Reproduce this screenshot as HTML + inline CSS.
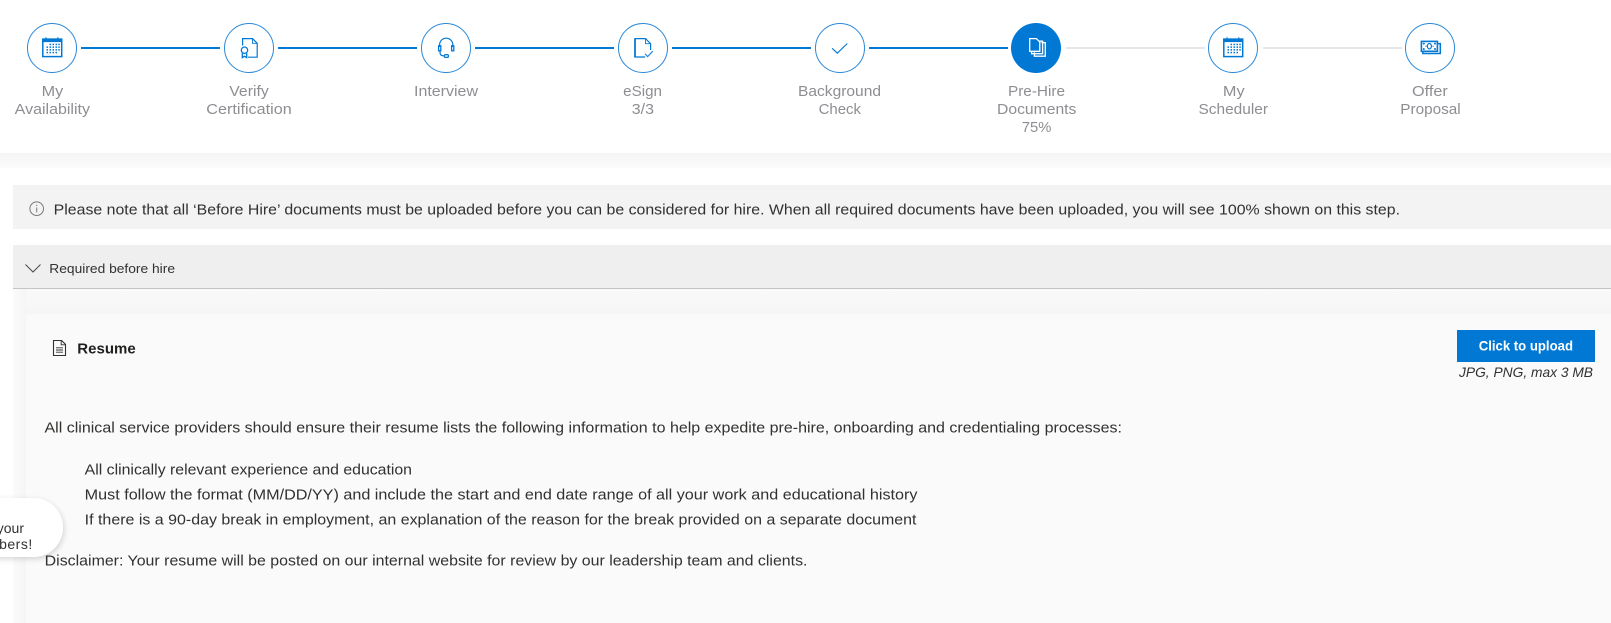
<!DOCTYPE html>
<html lang="en">
<head>
<meta charset="utf-8">
<title>Pre-Hire Documents</title>
<style>
html,body{margin:0;padding:0;background:#fff;width:1611px;height:623px;overflow:hidden}
svg{display:block;position:absolute;left:0;top:0}
text{font-family:"Liberation Sans",Arial,sans-serif}
.s{font-size:15px;fill:#8f8d92}
.b{font-size:15px;fill:#323130}
</style>
</head>
<body>
<svg width="1611" height="623" viewBox="0 0 1611 623" xmlns="http://www.w3.org/2000/svg">
<defs>
<linearGradient id="hs" x1="0" y1="0" x2="0" y2="1"><stop offset="0" stop-color="#f5f5f5"/><stop offset="1" stop-color="#fbfbfb"/></linearGradient>
<linearGradient id="ls" x1="0" y1="0" x2="1" y2="0"><stop offset="0" stop-color="#fbfbfb"/><stop offset="1" stop-color="#f5f5f5"/></linearGradient>
<linearGradient id="ts" x1="0" y1="0" x2="0" y2="1"><stop offset="0" stop-color="#f9f9f9"/><stop offset="1" stop-color="#f6f6f6"/></linearGradient>
<filter id="sh" x="-30%" y="-30%" width="160%" height="160%"><feDropShadow dx="1" dy="2" stdDeviation="3" flood-color="#000" flood-opacity=".16"/></filter>
<g id="cal" fill="none" stroke="#0078d4">
<rect x="-9.2" y="-8.2" width="18.9" height="17.5" stroke-width="1.5" fill="#fff"/>
<rect x="-9.8" y="-8.8" width="20" height="3.6" fill="#0078d4" stroke="none"/>
<path d="M-6-10V-6.5M5.8-10V-6.5" stroke-width="1.1"/>
<g fill="#0078d4" stroke="none">
<rect x="-2.5" y="-3.6" width="1.5" height="1.5"/><rect x=".5" y="-3.6" width="1.5" height="1.5"/><rect x="3.5" y="-3.6" width="1.5" height="1.5"/><rect x="6.3" y="-3.6" width="1.5" height="1.5"/>
<rect x="-5.5" y="-.9" width="1.5" height="1.5"/><rect x="-2.5" y="-.9" width="1.5" height="1.5"/><rect x=".5" y="-.9" width="1.5" height="1.5"/><rect x="3.5" y="-.9" width="1.5" height="1.5"/><rect x="6.3" y="-.9" width="1.5" height="1.5"/>
<rect x="-5.5" y="1.8" width="1.5" height="1.5"/><rect x="-2.5" y="1.8" width="1.5" height="1.5"/><rect x=".5" y="1.8" width="1.5" height="1.5"/><rect x="3.5" y="1.8" width="1.5" height="1.5"/><rect x="6.3" y="1.8" width="1.5" height="1.5"/>
<rect x="-5.5" y="4.5" width="1.5" height="1.5"/><rect x="-2.5" y="4.5" width="1.5" height="1.5"/><rect x=".5" y="4.5" width="1.5" height="1.5"/><rect x="3.5" y="4.5" width="1.5" height="1.5"/>
</g>
</g>
</defs>

<!-- header shadow -->
<rect x="0" y="153" width="1611" height="15" fill="url(#hs)"/>

<!-- connector lines -->
<g fill="#0078d4">
<rect x="81" y="47" width="139" height="2"/><rect x="278" y="47" width="139" height="2"/><rect x="475" y="47" width="139" height="2"/><rect x="672" y="47" width="139" height="2"/><rect x="869" y="47" width="139" height="2"/>
</g>
<g fill="#e6e6ea">
<rect x="1066" y="47" width="139" height="2"/><rect x="1263" y="47" width="139" height="2"/>
</g>

<!-- step circles -->
<g fill="#fff" stroke="#2b88d8" stroke-width="1">
<circle cx="52" cy="48" r="24.5"/><circle cx="249" cy="48" r="24.5"/><circle cx="446" cy="48" r="24.5"/><circle cx="643" cy="48" r="24.5"/><circle cx="840" cy="48" r="24.5"/><circle cx="1233" cy="48" r="24.5"/><circle cx="1430" cy="48" r="24.5"/>
</g>
<circle cx="1036" cy="48" r="25" fill="#0078d4"/>

<!-- icons -->
<use href="#cal" x="52" y="47.3"/>
<use href="#cal" x="1233" y="47.3"/>

<g fill="none" stroke="#0078d4" stroke-width="1.2">
<!-- verify -->
<path d="M242.6 45.5V38.6H252.5L257.2 43.3V57.2H248"/>
<path d="M252.5 38.6V43.3H257.2" stroke-width=".9"/>
<circle cx="244.5" cy="50.2" r="3.2" stroke-width="1.3"/>
<path d="M242.3 53.2V57.6L244.5 56.3L246.7 57.6V53.2" stroke-width="1.3"/>
<!-- headset -->
<path d="M439.6 47V44.8A6.6 6.6 0 0 1 452.8 44.8V47"/>
<rect x="438.6" y="45.8" width="2.2" height="5" stroke-width="1.3"/>
<rect x="451.6" y="45.8" width="2.2" height="5" stroke-width="1.3"/>
<path d="M440 50.5V52.5Q440 55.7 443.6 55.9H444.4"/>
<rect x="444.4" y="54.6" width="4" height="2.8" rx="1.2" stroke-width="1.3"/>
<!-- esign -->
<path d="M645.2 57H635V38.6H645.5L650.6 43.7V50"/>
<path d="M645.5 38.6V43.7H650.6" stroke-width=".9"/>
<path d="M635 38.6V57.5" stroke-width="1.7"/>
<path d="M645 53.8L647.6 56.6L652.8 51.2" stroke="#2b88d8"/>
<!-- check -->
<path d="M832.2 48.3L837.3 53.2L847.3 43.5" stroke-width="1.1"/>
<!-- money -->
<rect x="1421.4" y="41.4" width="16" height="9.9" stroke-width="1.6"/>
<path d="M1437.5 43.6H1440.3V53.5H1422.8V51.3" stroke-width="1.5"/>
<ellipse cx="1429.4" cy="46.2" rx="2" ry="2.7" stroke-width="1.2"/>
</g>
<g fill="#0078d4">
<circle cx="1423.8" cy="43.6" r="1"/><circle cx="1435" cy="43.6" r="1"/><circle cx="1423.8" cy="49" r="1"/><circle cx="1435" cy="49" r="1"/>
<rect x="1425.4" y="45.7" width="1.1" height="1.1"/><rect x="1432.5" y="45.7" width="1.1" height="1.1"/>
</g>
<!-- pre-hire docs -->
<g fill="none" stroke="#fff" stroke-width="1.3">
<path d="M1041.4 42.6H1045.3V56.2H1034.4V52.2"/>
<path d="M1039.5 41.2H1042.6V53.7H1031.6V51.2"/>
<path d="M1029.7 38.6H1036.4L1039.8 42V51.3H1029.7Z" fill="#0078d4"/>
</g>

<!-- step labels -->
<text class="s" x="41.7" y="96" textLength="21.6" lengthAdjust="spacingAndGlyphs">My</text>
<text class="s" x="14.7" y="114" textLength="75.3" lengthAdjust="spacingAndGlyphs">Availability</text>
<text class="s" x="229.3" y="96" textLength="39.4" lengthAdjust="spacingAndGlyphs">Verify</text>
<text class="s" x="206.3" y="114" textLength="85.4" lengthAdjust="spacingAndGlyphs">Certification</text>
<text class="s" x="414" y="96" textLength="64" lengthAdjust="spacingAndGlyphs">Interview</text>
<text class="s" x="623.2" y="96" textLength="38.8" lengthAdjust="spacingAndGlyphs">eSign</text>
<text class="s" x="631.8" y="114" textLength="22.2" lengthAdjust="spacingAndGlyphs">3/3</text>
<text class="s" x="798" y="96" textLength="83" lengthAdjust="spacingAndGlyphs">Background</text>
<text class="s" x="818.6" y="114" textLength="42.4" lengthAdjust="spacingAndGlyphs">Check</text>
<text class="s" x="1008" y="96" textLength="57" lengthAdjust="spacingAndGlyphs">Pre-Hire</text>
<text class="s" x="997" y="114" textLength="79.4" lengthAdjust="spacingAndGlyphs">Documents</text>
<text class="s" x="1021.8" y="132" textLength="29.6" lengthAdjust="spacingAndGlyphs">75%</text>
<text class="s" x="1222.9" y="96" textLength="21.7" lengthAdjust="spacingAndGlyphs">My</text>
<text class="s" x="1198.5" y="114" textLength="69.5" lengthAdjust="spacingAndGlyphs">Scheduler</text>
<text class="s" x="1412" y="96" textLength="35.8" lengthAdjust="spacingAndGlyphs">Offer</text>
<text class="s" x="1400.3" y="114" textLength="60.3" lengthAdjust="spacingAndGlyphs">Proposal</text>

<!-- notice -->
<rect x="13" y="185" width="1598" height="44" fill="#f3f3f3"/>
<circle cx="36.7" cy="208.7" r="6.8" fill="none" stroke="#7a7a7a" stroke-width="1"/>
<rect x="36.2" y="207.4" width="1" height="5" fill="#7a7a7a"/><rect x="36.2" y="204.8" width="1" height="1.2" fill="#7a7a7a"/>
<text class="b" x="53.7" y="214.6" textLength="1346.3" lengthAdjust="spacingAndGlyphs">Please note that all ‘Before Hire’ documents must be uploaded before you can be considered for hire. When all required documents have been uploaded, you will see 100% shown on this step.</text>

<!-- accordion header -->
<rect x="13" y="245" width="1598" height="43" fill="#efefef"/>
<rect x="13" y="288" width="1598" height="1" fill="#c4c4c4"/>
<path d="M25.5 264.5L33 272L40.5 264.5" fill="none" stroke="#4a4a4a" stroke-width="1"/>
<text x="49.3" y="273" font-size="13" fill="#323130" textLength="125.7" lengthAdjust="spacingAndGlyphs">Required before hire</text>

<!-- content -->
<rect x="13" y="289" width="1598" height="334" fill="#f8f8f8"/>
<rect x="13" y="289" width="13" height="334" fill="url(#ls)"/>
<rect x="26" y="289" width="1585" height="25" fill="url(#ts)"/>
<rect x="26" y="314" width="1585" height="309" fill="#fafafa"/>

<!-- resume -->
<g fill="none" stroke="#323130" stroke-width="1.1">
<path d="M53.5 340.5H61.6L65.5 344.4V355.5H53.5Z"/>
<path d="M61.2 340.5V344.8H65.5" stroke-width=".9"/>
<path d="M56 347.8H63M56 350H63M56 352.2H63" stroke-width=".9"/>
</g>
<text x="77.3" y="353.6" font-size="15" font-weight="700" fill="#201f1e" textLength="58.4" lengthAdjust="spacingAndGlyphs">Resume</text>

<rect x="1457" y="330" width="138" height="32" fill="#0078d4"/>
<text x="1478.7" y="350.7" font-size="13.5" font-weight="700" fill="#fff" textLength="94.3" lengthAdjust="spacingAndGlyphs">Click to upload</text>
<text x="1459" y="377" font-size="14" font-style="italic" fill="#323130" textLength="134" lengthAdjust="spacingAndGlyphs">JPG, PNG, max 3 MB</text>

<text class="b" x="44.5" y="432.6" textLength="1077.5" lengthAdjust="spacingAndGlyphs">All clinical service providers should ensure their resume lists the following information to help expedite pre-hire, onboarding and credentialing processes:</text>
<text class="b" x="84.7" y="474.6" textLength="327.3" lengthAdjust="spacingAndGlyphs">All clinically relevant experience and education</text>
<text class="b" x="84.7" y="499.6" textLength="832.8" lengthAdjust="spacingAndGlyphs">Must follow the format (MM/DD/YY) and include the start and end date range of all your work and educational history</text>
<text class="b" x="84.7" y="524.6" textLength="831.8" lengthAdjust="spacingAndGlyphs">If there is a 90-day break in employment, an explanation of the reason for the break provided on a separate document</text>
<text class="b" x="44.7" y="565.6" textLength="762.8" lengthAdjust="spacingAndGlyphs">Disclaimer: Your resume will be posted on our internal website for review by our leadership team and clients.</text>

<!-- chat bubble, clipped by left edge -->
<rect x="-60" y="498" width="123" height="59" rx="29.5" fill="#fff" filter="url(#sh)"/>
<text x="24" y="533" font-size="14" fill="#323130" text-anchor="end">your</text>
<text x="32.7" y="549" font-size="14" fill="#323130" text-anchor="end" letter-spacing=".5">members!</text>
</svg>
</body>
</html>
